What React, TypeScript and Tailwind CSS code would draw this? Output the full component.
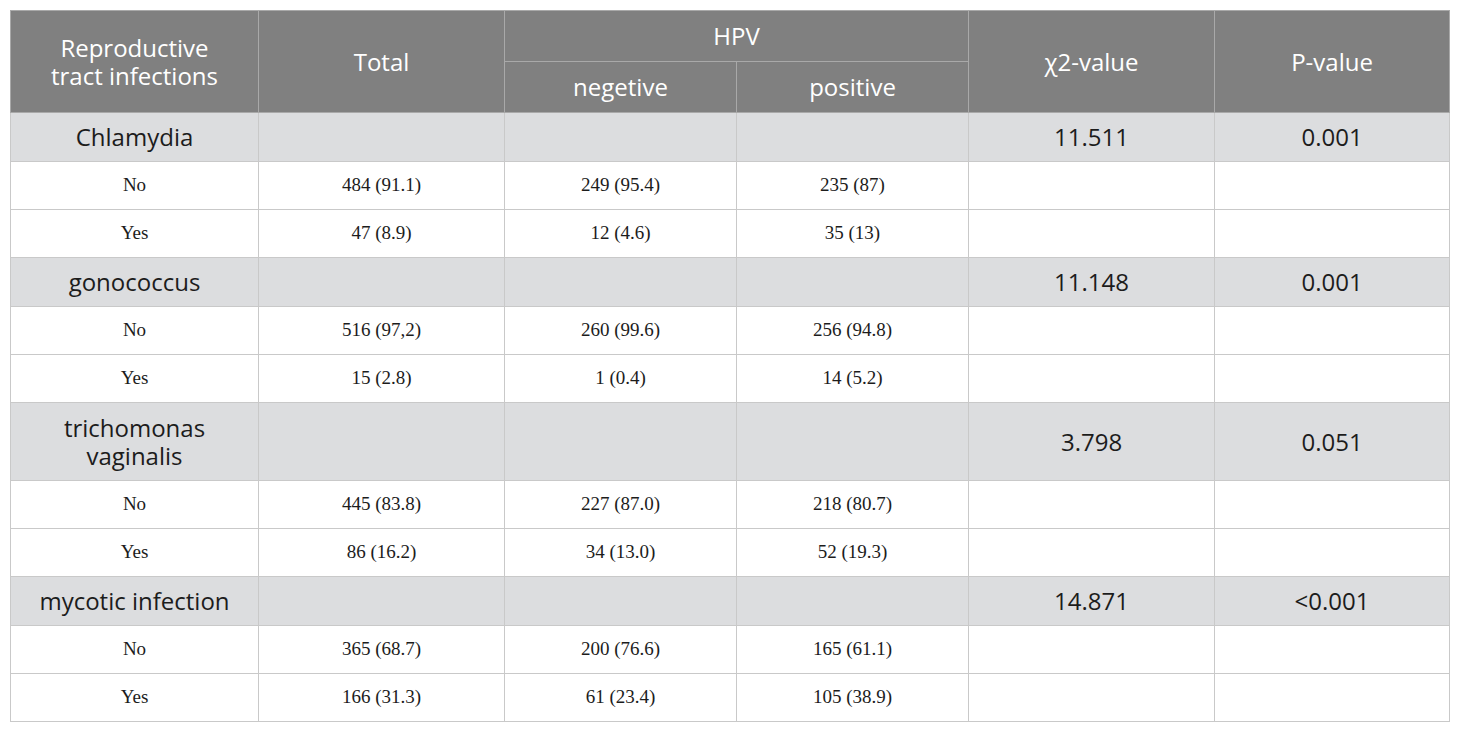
import React from 'react';

// Tabla: infecciones del tracto reproductivo vs HPV
interface Group {
    label: React.ReactNode;
    chi: string;
    p: string;
    tall?: boolean;
    rows: { name: string; total: string; neg: string; pos: string }[];
}

const groups: Group[] = [
    {
        label: 'Chlamydia',
        chi: '11.511',
        p: '0.001',
        rows: [
            { name: 'No', total: '484 (91.1)', neg: '249 (95.4)', pos: '235 (87)' },
            { name: 'Yes', total: '47 (8.9)', neg: '12 (4.6)', pos: '35 (13)' },
        ],
    },
    {
        label: 'gonococcus',
        chi: '11.148',
        p: '0.001',
        rows: [
            { name: 'No', total: '516 (97,2)', neg: '260 (99.6)', pos: '256 (94.8)' },
            { name: 'Yes', total: '15 (2.8)', neg: '1 (0.4)', pos: '14 (5.2)' },
        ],
    },
    {
        label: (
            <>
                trichomonas
                <br />
                vaginalis
            </>
        ),
        chi: '3.798',
        p: '0.051',
        tall: true,
        rows: [
            { name: 'No', total: '445 (83.8)', neg: '227 (87.0)', pos: '218 (80.7)' },
            { name: 'Yes', total: '86 (16.2)', neg: '34 (13.0)', pos: '52 (19.3)' },
        ],
    },
    {
        label: 'mycotic infection',
        chi: '14.871',
        p: '<0.001',
        rows: [
            { name: 'No', total: '365 (68.7)', neg: '200 (76.6)', pos: '165 (61.1)' },
            { name: 'Yes', total: '166 (31.3)', neg: '61 (23.4)', pos: '105 (38.9)' },
        ],
    },
];

const sans = "font-['Open_Sans',_'Liberation_Sans',_sans-serif]";
const serif = "font-['Liberation_Serif',_'Times_New_Roman',_serif]";

const th = `border border-[#a9a9a9] bg-[#808080] text-white font-normal text-[24px] leading-[28px] text-center align-middle ${sans}`;
const gcell = `border border-[#c9c9c9] bg-[#dcdddf] text-[#1c1c1c] text-[24px] leading-[28px] text-center align-middle ${sans}`;
const dcell = `border border-[#c9c9c9] bg-white text-[#1c1c1c] text-[19px] text-center align-middle ${serif}`;

const App: React.FC = () => {
    return (
        <div className="min-h-screen bg-white p-[10px]">
            <table className="w-[1439px] table-fixed border-collapse">
                <colgroup>
                    <col className="w-[248px]" />
                    <col className="w-[246px]" />
                    <col className="w-[232px]" />
                    <col className="w-[232px]" />
                    <col className="w-[246px]" />
                    <col className="w-[235px]" />
                </colgroup>
                <thead>
                    <tr className="h-[51px]">
                        <th rowSpan={2} className={th}>
                            Reproductive
                            <br />
                            tract infections
                        </th>
                        <th rowSpan={2} className={th}>Total</th>
                        <th colSpan={2} className={th}>HPV</th>
                        <th rowSpan={2} className={th}>χ2-value</th>
                        <th rowSpan={2} className={th}>P-value</th>
                    </tr>
                    <tr className="h-[51px]">
                        <th className={th}>negetive</th>
                        <th className={th}>positive</th>
                    </tr>
                </thead>
                <tbody>
                    {groups.map((g, i) => (
                        <React.Fragment key={i}>
                            <tr className={g.tall ? 'h-[78px]' : 'h-[49px]'}>
                                <td className={gcell}>{g.label}</td>
                                <td className={gcell}></td>
                                <td className={gcell}></td>
                                <td className={gcell}></td>
                                <td className={gcell}>{g.chi}</td>
                                <td className={gcell}>{g.p}</td>
                            </tr>
                            {g.rows.map((r) => (
                                <tr key={r.name} className="h-[48px]">
                                    <td className={dcell}>{r.name}</td>
                                    <td className={dcell}>{r.total}</td>
                                    <td className={dcell}>{r.neg}</td>
                                    <td className={dcell}>{r.pos}</td>
                                    <td className={dcell}></td>
                                    <td className={dcell}></td>
                                </tr>
                            ))}
                        </React.Fragment>
                    ))}
                </tbody>
            </table>
        </div>
    );
};

export default App;
